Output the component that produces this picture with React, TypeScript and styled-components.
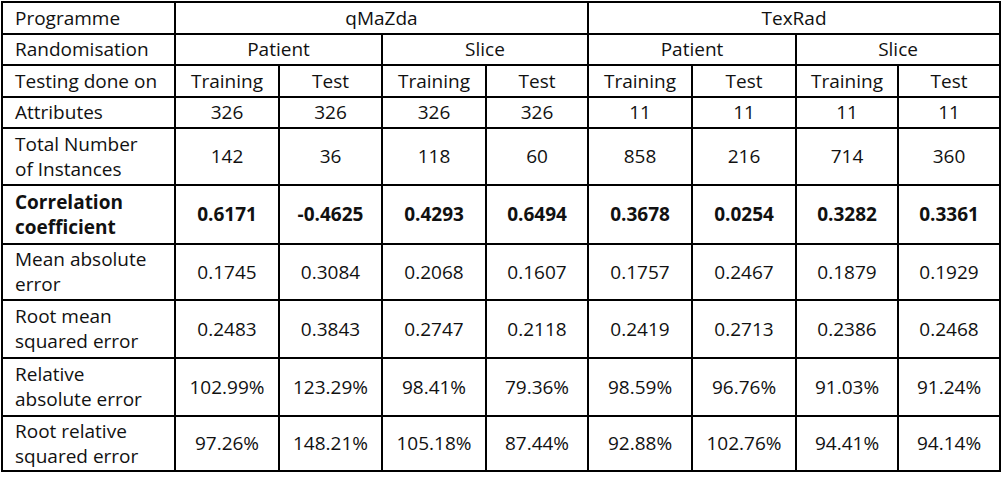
import React from 'react';
import styled, { createGlobalStyle } from 'styled-components';

const GlobalStyle = createGlobalStyle`
    body {
        margin: 0;
        background: #ffffff;
        font-family: "Open Sans", "Noto Sans", sans-serif;
        color: #111;
    }
`

const Wrapper = styled.div`
    padding: 1px 0 0 1px;
`
const Table = styled.table`
    border-collapse: collapse;
    table-layout: fixed;
    width: 1000px;
    font-size: 19px;
    line-height: 25px;
`
const Row = styled.tr<{ $h: number }>`
    height: ${p => p.$h}px;
`
const Label = styled.td<{ $bold?: boolean }>`
    border: 2px solid #000;
    padding: 0 4px 0 12px;
    text-align: left;
    vertical-align: middle;
    font-weight: ${p => (p.$bold ? 700 : 400)};
    white-space: nowrap;
`
const Cell = styled.td<{ $bold?: boolean }>`
    border: 2px solid #000;
    padding: 0;
    text-align: center;
    vertical-align: middle;
    font-weight: ${p => (p.$bold ? 700 : 400)};
    white-space: nowrap;
`

const widths = [173, 104, 103, 104, 102, 104, 104, 102, 102]

const rows: { label: string[]; values: string[]; h: number; bold?: boolean }[] = [
    { label: ['Attributes'], values: ['326', '326', '326', '326', '11', '11', '11', '11'], h: 31 },
    { label: ['Total Number', 'of Instances'], values: ['142', '36', '118', '60', '858', '216', '714', '360'], h: 57 },
    { label: ['Correlation', 'coefficient'], values: ['0.6171', '-0.4625', '0.4293', '0.6494', '0.3678', '0.0254', '0.3282', '0.3361'], h: 59, bold: true },
    { label: ['Mean absolute', 'error'], values: ['0.1745', '0.3084', '0.2068', '0.1607', '0.1757', '0.2467', '0.1879', '0.1929'], h: 56 },
    { label: ['Root mean', 'squared error'], values: ['0.2483', '0.3843', '0.2747', '0.2118', '0.2419', '0.2713', '0.2386', '0.2468'], h: 58 },
    { label: ['Relative', 'absolute error'], values: ['102.99%', '123.29%', '98.41%', '79.36%', '98.59%', '96.76%', '91.03%', '91.24%'], h: 58 },
    { label: ['Root relative', 'squared error'], values: ['97.26%', '148.21%', '105.18%', '87.44%', '92.88%', '102.76%', '94.41%', '94.14%'], h: 55 },
]

const App = () => {
    return (
        <Wrapper>
            <GlobalStyle />
            <Table>
                <colgroup>
                    {widths.map((w, i) => <col key={i} style={{ width: w }} />)}
                </colgroup>
                <tbody>
                    <Row $h={32}>
                        <Label>Programme</Label>
                        <Cell colSpan={4}>qMaZda</Cell>
                        <Cell colSpan={4}>TexRad</Cell>
                    </Row>
                    <Row $h={31}>
                        <Label>Randomisation</Label>
                        <Cell colSpan={2}>Patient</Cell>
                        <Cell colSpan={2}>Slice</Cell>
                        <Cell colSpan={2}>Patient</Cell>
                        <Cell colSpan={2}>Slice</Cell>
                    </Row>
                    <Row $h={32}>
                        <Label>Testing done on</Label>
                        {[0, 1, 2, 3].map(i => (
                            <React.Fragment key={i}>
                                <Cell>Training</Cell>
                                <Cell>Test</Cell>
                            </React.Fragment>
                        ))}
                    </Row>
                    {rows.map(r => (
                        <Row key={r.label.join(' ')} $h={r.h}>
                            <Label $bold={r.bold}>
                                {r.label.map((l, i) => <div key={i}>{l}</div>)}
                            </Label>
                            {r.values.map((v, i) => <Cell key={i} $bold={r.bold}>{v}</Cell>)}
                        </Row>
                    ))}
                </tbody>
            </Table>
        </Wrapper>
    )
}

export default App;
